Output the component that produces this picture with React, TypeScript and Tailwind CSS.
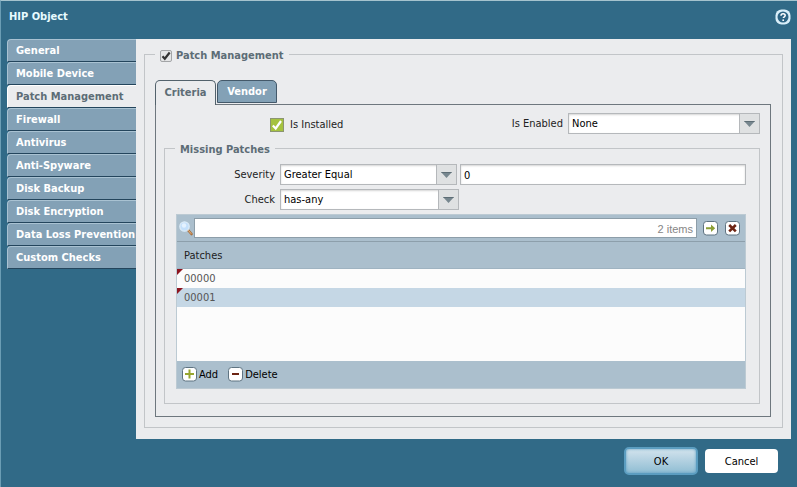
import { useState, type ReactNode } from 'react';

const NAV_ITEMS = [
  'General',
  'Mobile Device',
  'Patch Management',
  'Firewall',
  'Antivirus',
  'Anti-Spyware',
  'Disk Backup',
  'Disk Encryption',
  'Data Loss Prevention',
  'Custom Checks',
];

const PATCHES = ['00000', '00001'];

interface ComboProps {
  id: string;
  options: string[];
  className: string;
}

function Combo({ id, options, className }: ComboProps) {
  return (
    <div className={`relative h-[21px] ${className}`}>
      <select
        id={id}
        className="block h-full w-full appearance-none border border-[#b5b8bb] bg-white pt-px pr-6 pl-[3px] text-black shadow-[inset_0_1px_2px_#d5d5d5] outline-none"
      >
        {options.map((option) => (
          <option key={option}>{option}</option>
        ))}
      </select>
      <span className="pointer-events-none absolute inset-y-0 right-0 flex w-[21px] items-center justify-center border border-[#b5b8bb] bg-[#dfe1e2]">
        <svg width="11" height="6" viewBox="0 0 11 6">
          <path d="M0 0h11L5.500 6z" fill="#77878f" />
          <path d="M0 0h11l-1 1H1z" fill="#5d6d75" />
        </svg>
      </span>
    </div>
  );
}

function IconBox({ children }: { children: ReactNode }) {
  return (
    <svg width="15" height="15" viewBox="0 0 15 15" className="shrink-0">
      <rect x="0.5" y="0.5" width="14" height="13.500" rx="3" fill="#fff" stroke="#5f7482" />
      {children}
    </svg>
  );
}

function PatchGrid() {
  const [filter, setFilter] = useState('');

  return (
    <div className="mt-1 border border-[#bccad3] bg-[#fcfcfc]">
      {/* Filter bar */}
      <div className="flex h-[26px] items-center bg-[#abbfcd] pr-[5px] pl-[2px]">
        <svg width="14" height="15" viewBox="0 0 14 15" className="mr-px shrink-0">
          <path d="M9 9l3.500 4" stroke="#a9713f" strokeWidth="2.600" strokeLinecap="round" />
          <path d="M9.500 9.500l2.500 3" stroke="#e6b482" strokeWidth="1" strokeLinecap="round" />
          <circle cx="5.500" cy="5.500" r="4.700" fill="#c4e0fb" stroke="#dcebf7" strokeWidth="1.200" />
          <circle cx="5" cy="4.500" r="2.200" fill="#e4f2ff" />
        </svg>
        <div className="relative flex-1">
          <input
            type="text"
            aria-label="Filter patches"
            value={filter}
            onChange={(e) => setFilter(e.target.value)}
            className="block h-5 w-full border border-[#8d9ea9] bg-white pl-1 pr-14 outline-none"
          />
          <span className="absolute inset-y-0 right-1 flex items-center pt-[2px] font-[Liberation_Sans,sans-serif] text-[11px] text-[#868686]">
            2 items
          </span>
        </div>
        <button type="button" aria-label="Apply filter" className="ml-[6px]">
          <IconBox>
            <path d="M3 6.200h5V3.500L12.200 7.200 8 11V8.200H3z" fill="#8c9f35" />
          </IconBox>
        </button>
        <button type="button" aria-label="Clear filter" className="ml-[7px]">
          <IconBox>
            <path d="M4.200 4l6.600 6.400M10.800 4L4.200 10.400" stroke="#6d2413" strokeWidth="2.600" />
          </IconBox>
        </button>
      </div>

      {/* Patch rows */}
      <div className="min-h-[120px]">
        <table className="w-full border-collapse">
          <thead>
            <tr>
              <th className="h-[27px] border-y border-t-[#8d9fab] border-b-[#9fb3c1] bg-[#abbfcd] px-[7px] pt-[2px] pb-0 text-left font-normal text-[#222]">
                Patches
              </th>
            </tr>
          </thead>
          <tbody>
            {PATCHES.map((patch) => (
              <tr key={patch} className="even:bg-[#c5d7e5]">
                <td className="relative h-[19px] px-[7px] pt-px pb-0 text-[#555]">
                  <svg width="6" height="6" viewBox="0 0 6 6" className="absolute top-0 left-0">
                    <path d="M0 0h6L0 6z" fill="#8e1520" />
                  </svg>
                  {patch}
                </td>
              </tr>
            ))}
          </tbody>
        </table>
      </div>

      {/* Row actions */}
      <div className="flex h-[27px] items-center gap-[10px] bg-[#abbfcd] pl-[5px]">
        <button type="button" className="flex items-center gap-[2px] text-black">
          <IconBox>
            <path d="M7.500 2.500v9M3 7h9" stroke="#97a62f" strokeWidth="2" />
          </IconBox>
          Add
        </button>
        <button type="button" className="flex items-center gap-[2px] text-black">
          <IconBox>
            <path d="M4 7h7" stroke="#6d2413" strokeWidth="2" />
          </IconBox>
          Delete
        </button>
      </div>
    </div>
  );
}

export default function App() {
  const [page, setPage] = useState('Patch Management');
  const [enabled, setEnabled] = useState(true);
  const [installed, setInstalled] = useState(true);

  return (
    <div className="flex min-h-screen flex-col border-t border-l border-t-[#a5c3ce] border-l-[#6b9db4] bg-[#316a87] font-['DejaVu_Sans_Condensed','DejaVu_Sans',sans-serif] text-[11px] leading-4 text-[#222]">
      {/* Title bar */}
      <header className="flex h-[38px] items-start justify-between pt-2 pr-[6px] pl-2">
        <h1 className="font-bold text-[#e8fbff]">HIP Object</h1>
        <button type="button" aria-label="Help">
          <svg width="16" height="16" viewBox="0 0 16 16">
            <rect x="0.500" y="0.500" width="15" height="15" rx="6" fill="#d9effa" />
            <circle cx="8" cy="8" r="5.500" fill="#2d6585" />
            <path
              d="M6 6.800C6 5.300 7 4.700 8.100 4.700s2.100.7 2.100 1.800c0 1.300-1.900 1.300-1.900 2.600"
              fill="none"
              stroke="#fff"
              strokeWidth="1.500"
            />
            <circle cx="8.200" cy="11.200" r="0.900" fill="#fff" />
          </svg>
        </button>
      </header>

      <div className="flex flex-1 pr-[6px]">
        {/* Side tabs */}
        <nav className="w-[135px] shrink-0 pl-[6px] text-white">
          {NAV_ITEMS.map((item) => (
            <button
              key={item}
              type="button"
              onClick={() => setPage(item)}
              className={`block h-[23px] w-full rounded-tl border-t border-b border-l border-b-[#24455c] pl-2 text-left font-bold whitespace-nowrap ${
                item === page
                  ? 'border-t-white border-l-white bg-[#ebecee] text-[#5d6d76]'
                  : 'border-t-[#a9c2d2] border-l-[#a9c2d2] bg-[#83a1b6]'
              }`}
            >
              {item}
            </button>
          ))}
        </nav>

        {/* Page */}
        <main className="min-w-0 flex-1 bg-[#ebecee] px-2 pt-[6px] pb-[11px]">
          <fieldset className="min-w-0 border border-[#c2c5c8] pr-[11px] pb-[10px] pl-[10px]">
            <legend className="px-[5px] pt-[3px] font-bold text-[#5d6d76]">
              <label className="flex items-center gap-1">
                <span className="relative block h-3 w-3">
                  <input
                    type="checkbox"
                    checked={enabled}
                    onChange={(e) => setEnabled(e.target.checked)}
                    className="block h-3 w-3 appearance-none rounded-[2px] border border-[#a3a5a7] bg-[#e4e5e6]"
                  />
                  {enabled && (
                    <svg width="12" height="12" viewBox="0 0 12 12" className="pointer-events-none absolute inset-0">
                      <path d="M2.500 6.200l2.300 2.600L9.700 2.500" fill="none" stroke="#333" strokeWidth="2.200" />
                    </svg>
                  )}
                </span>
                Patch Management
              </label>
            </legend>

            {/* Criteria / Vendor tabs */}
            <div className="mt-4 flex items-start gap-px font-bold">
              <button
                type="button"
                className="relative z-10 -mb-px h-[25px] w-[61px] rounded-t-[5px] border border-b-0 border-[#53626c] bg-[#ebecee] text-[#5d6d76]"
              >
                Criteria
              </button>
              <button
                type="button"
                className="h-[23px] w-[60px] rounded-t-[5px] border border-[#44596a] bg-[#83a1b6] text-white"
              >
                Vendor
              </button>
            </div>

            <div className="border border-[#6e777e] pt-[8px] pr-[10px] pb-3 pl-2">
              <div className="flex items-center justify-between pl-[106px]">
                <label className="flex items-center gap-[6px] pt-[2px]">
                  <span className="relative block h-[14px] w-[14px]">
                    <input
                      type="checkbox"
                      checked={installed}
                      onChange={(e) => setInstalled(e.target.checked)}
                      className="block h-[14px] w-[14px] appearance-none border border-[#8b9571] bg-white checked:bg-[#a5c23f]"
                    />
                    {installed && (
                      <svg width="14" height="14" viewBox="0 0 14 14" className="pointer-events-none absolute inset-0">
                        <path d="M2.800 7.500l2.900 3L11 3" fill="none" stroke="#fff" strokeWidth="2.200" />
                      </svg>
                    )}
                  </span>
                  Is Installed
                </label>
                <div className="flex items-center gap-[5px]">
                  <label htmlFor="is-enabled">Is Enabled</label>
                  <Combo id="is-enabled" options={['None', 'Yes', 'No']} className="w-[192px]" />
                </div>
              </div>

              <fieldset className="mt-[5px] min-w-0 border border-[#c2c5c8] pr-[13px] pb-[14px] pl-[11px]">
                <legend className="-ml-px px-[5px] pt-[3px] font-bold text-[#5d6d76]">Missing Patches</legend>
                <div className="mt-[6px] flex items-center gap-[5px]">
                  <label htmlFor="severity" className="w-[99px] text-right">
                    Severity
                  </label>
                  <div className="flex flex-1 gap-[3px]">
                    <Combo
                      id="severity"
                      options={['Greater Equal', 'Greater Than', 'Less Equal', 'Less Than']}
                      className="w-[177px]"
                    />
                    <input
                      type="text"
                      aria-label="Severity value"
                      defaultValue="0"
                      className="h-[21px] min-w-0 flex-1 border border-[#b5b8bb] bg-white px-[3px] pt-px text-black shadow-[inset_0_1px_2px_#d5d5d5] outline-none"
                    />
                  </div>
                </div>
                <div className="mt-1 flex items-center gap-[5px]">
                  <label htmlFor="check" className="w-[99px] text-right">
                    Check
                  </label>
                  <Combo id="check" options={['has-any', 'has-all', 'has-none']} className="w-[179px]" />
                </div>
                <PatchGrid />
              </fieldset>
            </div>
          </fieldset>
        </main>
      </div>

      {/* Dialog buttons */}
      <footer className="flex items-center justify-end gap-[7px] pt-2 pr-[19px] pb-3 text-black">
        <button
          type="button"
          className="h-7 w-[74px] rounded-[5px] border-2 border-[#5b9dc0] bg-linear-to-b from-[#d3e3ed] to-[#8fbdd3] pt-px shadow-[inset_0_0_3px_#5b9dc0]"
        >
          OK
        </button>
        <button type="button" className="h-6 w-[73px] rounded-[4px] bg-white pt-px">
          Cancel
        </button>
      </footer>
    </div>
  );
}
